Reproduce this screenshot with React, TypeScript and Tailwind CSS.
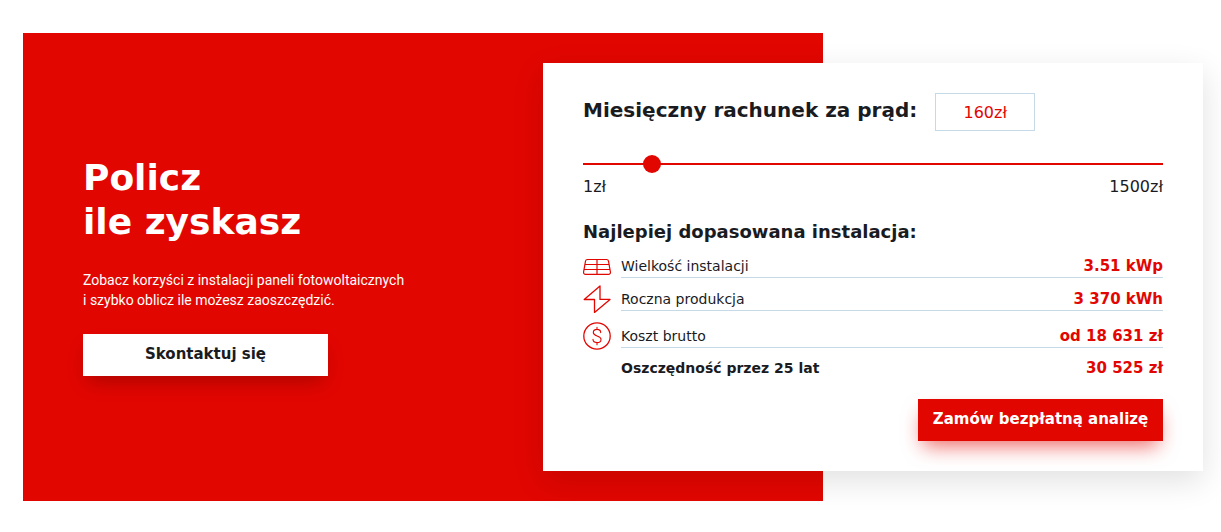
import { useState, type ReactNode } from "react";

const wide = "font-['DejaVu_Sans',sans-serif]";

function PanelIcon() {
  return (
    <svg className="size-7 shrink-0" viewBox="0 0 28 28" fill="none" stroke="#e20600" strokeWidth="1.2" aria-hidden="true">
      <path d="M4.500 7.500h19a2 2 0 0 1 2 1.600l1.900 10.800a2 2 0 0 1-2 2.500H2.600a2 2 0 0 1-2-2.500L2.500 9.100a2 2 0 0 1 2-1.600zM14 7.500v14.900M2 12.500h24M1.200 17.500h25.600" />
    </svg>
  );
}

function BoltIcon() {
  return (
    <svg className="size-7 shrink-0" viewBox="0 0 28 28" fill="none" stroke="#e20600" strokeWidth="1.3" strokeLinejoin="round" aria-hidden="true">
      <path d="M17 .9v13.500h10L11.500 27.500V14.500H1.200z" />
    </svg>
  );
}

function CostIcon() {
  return (
    <svg className="size-7 shrink-0" viewBox="0 0 28 28" fill="none" stroke="#e20600" strokeWidth="1.3" strokeLinecap="round" aria-hidden="true">
      <circle cx="14" cy="14" r="13.2" />
      <path strokeWidth="1.1" d="M14 5.2v2.200M14 20.600v2.200M17.700 10.600c0-1.900-1.500-3.200-3.700-3.200s-3.700 1.200-3.700 3.100c0 4.200 7.700 2.600 7.700 6.900 0 2-1.700 3.200-4 3.200s-4-1.300-4-3.300" />
    </svg>
  );
}

function Row({ icon, label, value, strong, className }: { icon?: ReactNode; label: string; value: string; strong?: boolean; className?: string }) {
  return (
    <div className={`flex items-center gap-[10px] ${className ?? ""}`}>
      {icon ?? <span className="size-7 shrink-0" />}
      <dl className={`flex h-6 flex-1 items-center justify-between border-b pt-0.5 ${strong ? "border-transparent" : "border-[#c5d9e6]"}`}>
        <dt className={strong ? "text-[14px] font-bold" : "text-[14px]"}>{label}</dt>
        <dd className="text-[15px] font-bold text-[#e20600]">{value}</dd>
      </dl>
    </div>
  );
}

export default function App() {
  const [amount, setAmount] = useState(160);

  return (
    <main className={`grid grid-cols-[520fr_280fr_380fr] pt-[33px] pr-[18px] pb-[31px] pl-[23px] text-[#1a1b1f] ${wide}`}>
      <section className="col-span-2 col-start-1 row-start-1 flex flex-col items-start justify-center bg-[#e20600] pt-[60px] pb-[62px] pl-[60px] text-white">
        <h2 className="text-[36px] leading-[44px] font-bold">
          Policz
          <br />
          ile zyskasz
        </h2>
        <p className="mt-[26px] font-['Roboto',sans-serif] text-[14px] leading-5">
          Zobacz korzyści z instalacji paneli fotowoltaicznych
          <br />i szybko oblicz ile możesz zaoszczędzić.
        </p>
        <a href="#kontakt" className="mt-6 flex h-[42px] w-[245px] items-center justify-center bg-white pb-0.5 text-[15px] font-bold text-[#1a1b1f] shadow-[0_10px_20px_-5px_rgba(0,0,0,0.25)]">
          Skontaktuj się
        </a>
      </section>

      <section className="col-span-2 col-start-2 row-start-1 my-[30px] bg-white px-10 py-[30px] shadow-[0_10px_30px_rgba(0,0,0,0.12)]">
        <div className="flex items-center gap-[18px]">
          <label htmlFor="bill" className="pb-1 text-[20px] leading-6 font-bold whitespace-nowrap">
            Miesięczny rachunek za prąd:
          </label>
          <input
            id="bill"
            type="text"
            value={`${amount}zł`}
            onChange={(e) => setAmount(Math.min(1500, Number(e.target.value.replace(/\D/g, ""))))}
            className="h-[38px] w-[100px] border border-[#c5d9e6] bg-white text-center text-[16px] text-[#e20600]"
          />
        </div>

        <input
          type="range"
          min={1}
          max={1500}
          value={amount}
          onChange={(e) => setAmount(Number(e.target.value))}
          aria-label="Miesięczny rachunek za prąd"
          className="mt-6 block h-[18px] w-full cursor-pointer appearance-none bg-transparent [&::-webkit-slider-runnable-track]:h-[2px] [&::-webkit-slider-runnable-track]:bg-[#e20600] [&::-webkit-slider-thumb]:-mt-2 [&::-webkit-slider-thumb]:size-[18px] [&::-webkit-slider-thumb]:appearance-none [&::-webkit-slider-thumb]:rounded-full [&::-webkit-slider-thumb]:bg-[#e20600]"
        />
        <div className="mt-1 flex justify-between text-[16px] leading-5">
          <span>1zł</span>
          <span>1500zł</span>
        </div>

        <h3 className="mt-[23px] text-[18px] leading-6 font-bold">Najlepiej dopasowana instalacja:</h3>
        <div className="mt-2">
          <Row icon={<PanelIcon />} label="Wielkość instalacji" value="3.51 kWp" />
          <Row className="mt-[5px]" icon={<BoltIcon />} label="Roczna produkcja" value="3 370 kWh" />
          <Row className="mt-[9px]" icon={<CostIcon />} label="Koszt brutto" value="od 18 631 zł" />
          <Row className="mt-1" label="Oszczędność przez 25 lat" value="30 525 zł" strong />
        </div>
        <div className="mt-[17px] flex justify-end">
          <button type="button" className="h-[42px] w-[245px] bg-[#e20600] pb-0.5 text-[15px] font-bold whitespace-nowrap text-white shadow-[0_10px_20px_-5px_rgba(226,6,0,0.6)]">
            Zamów bezpłatną analizę
          </button>
        </div>
      </section>
    </main>
  );
}
